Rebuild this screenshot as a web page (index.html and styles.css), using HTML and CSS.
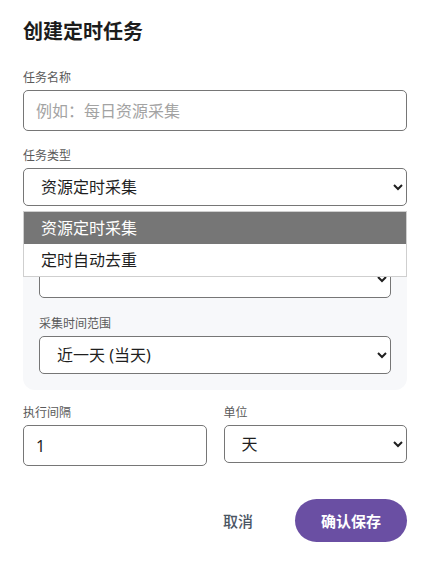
FILE: index.html
```html
<!DOCTYPE html>
<html lang="zh-CN">
<head>
<meta charset="utf-8">
<title>创建定时任务</title>
<link rel="stylesheet" href="styles.css">
</head>
<body>
<div class="dialog">
  <h2 class="title">创建定时任务</h2>

  <div class="field first">
    <label class="label">任务名称</label>
    <input class="input" type="text" placeholder="例如：每日资源采集">
  </div>

  <div class="field type-field">
    <label class="label">任务类型</label>
    <select class="select">
      <option>资源定时采集</option>
      <option>定时自动去重</option>
    </select>
    <ul class="popup">
      <li class="opt active">资源定时采集</li>
      <li class="opt">定时自动去重</li>
    </ul>
  </div>

  <div class="panel">
    <div class="field">
      <span class="label blank"></span>
      <select class="select inner">
        <option></option>
      </select>
    </div>
    <div class="field gap">
      <label class="label">采集时间范围</label>
      <select class="select inner">
        <option>近一天 (当天)</option>
      </select>
    </div>
  </div>

  <div class="row">
    <div class="field col">
      <label class="label">执行间隔</label>
      <input class="input" type="text" value="1">
    </div>
    <div class="field col">
      <label class="label">单位</label>
      <select class="select">
        <option>天</option>
      </select>
    </div>
  </div>

  <div class="actions">
    <button class="btn-cancel" type="button">取消</button>
    <button class="btn-save" type="button">确认保存</button>
  </div>
</div>
</body>
</html>
```

FILE: styles.css
```css
html, body {
  margin: 0;
  padding: 0;
  background: #ffffff;
}

body {
  font-family: "Noto Sans", "Noto Sans CJK SC", sans-serif;
  color: #1f1f1f;
}

.dialog {
  width: 384px;
  padding: 18px 0 0 23px;
}

.title {
  margin: 0;
  font-size: 20px;
  line-height: 28px;
  font-weight: 700;
  color: #1c1c1c;
}

.field {
  display: flex;
  flex-direction: column;
}

.field.first {
  margin-top: 24px;
}

.type-field {
  margin-top: 17px;
  position: relative;
}

.label {
  font-size: 12px;
  line-height: 16px;
  color: #5a5a5a;
  margin-bottom: 4px;
}

.label.blank {
  height: 16px;
}

.input {
  box-sizing: border-box;
  height: 41px;
  width: 100%;
  border: 1px solid #767676;
  border-radius: 5px;
  padding: 0 12px;
  font-family: "Noto Sans", "Noto Sans CJK SC", sans-serif;
  font-size: 16px;
  color: #1f1f1f;
  background: #fff;
  outline: none;
}

.input::placeholder {
  color: #a3a3a3;
}

.select {
  box-sizing: border-box;
  height: 38px;
  width: 100%;
  border: 1px solid #767676;
  border-radius: 5px;
  padding: 0 4px 0 13px;
  font-family: "Noto Sans", "Noto Sans CJK SC", sans-serif;
  font-size: 16px;
  color: #1f1f1f;
  background-color: #fff;
  outline: none;
}

.popup {
  position: absolute;
  left: 0;
  right: 0;
  top: 63px;
  margin: 0;
  padding: 0;
  list-style: none;
  background: #fff;
  border: 1px solid #cfcfcf;
  z-index: 10;
}

.opt {
  height: 32px;
  line-height: 32px;
  padding-left: 17px;
  font-size: 16px;
  color: #1f1f1f;
}

.opt.active {
  background: #767676;
  color: #fff;
}

.panel {
  margin-top: 18px;
  background: #f7f8fa;
  border-radius: 12px;
  padding: 16px;
}

.field.gap {
  margin-top: 18px;
}

.row {
  display: flex;
  gap: 17px;
  margin-top: 15px;
}

.col {
  flex: 1;
  min-width: 0;
}

.actions {
  display: flex;
  justify-content: flex-end;
  align-items: center;
  gap: 42px;
  margin-top: 33px;
}

.btn-cancel {
  border: none;
  background: none;
  padding: 0;
  font-family: "Noto Sans", "Noto Sans CJK SC", sans-serif;
  font-size: 15px;
  font-weight: 500;
  color: #4b5563;
}

.btn-save {
  border: none;
  height: 43px;
  width: 112px;
  border-radius: 22px;
  background: #6a4fa3;
  color: #fff;
  font-family: "Noto Sans", "Noto Sans CJK SC", sans-serif;
  font-size: 15px;
  font-weight: 700;
}
```
